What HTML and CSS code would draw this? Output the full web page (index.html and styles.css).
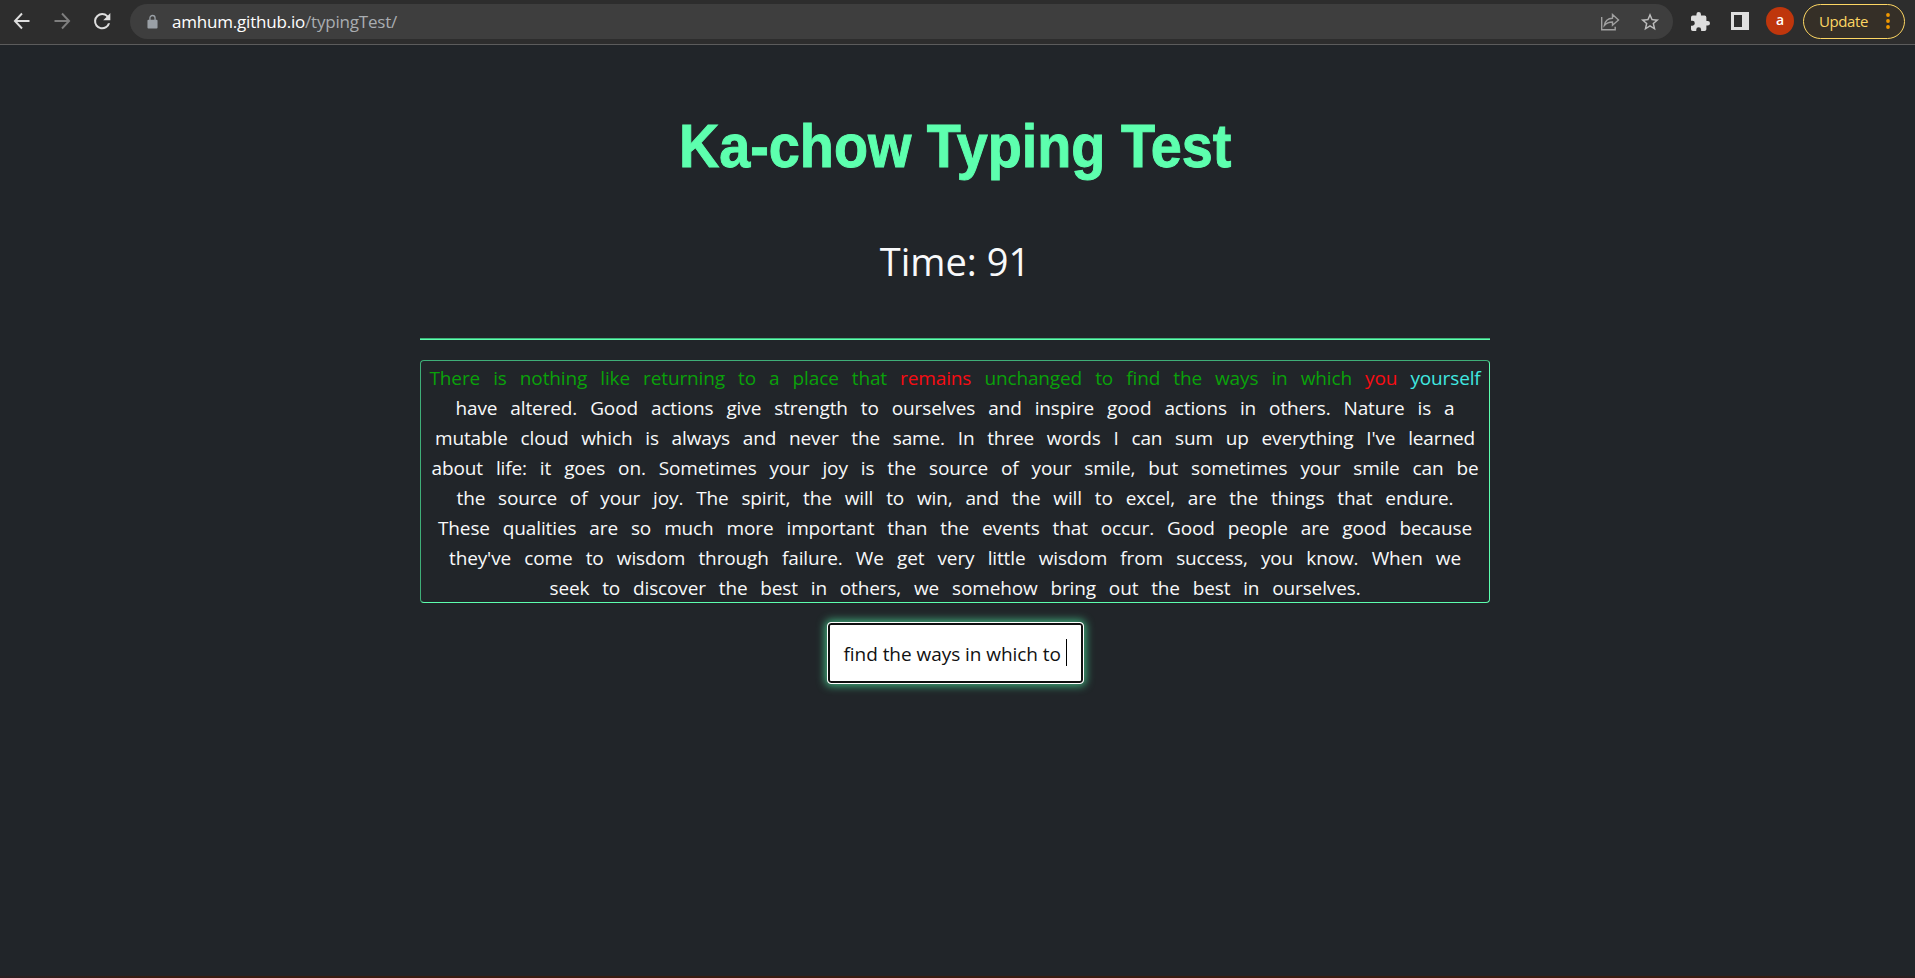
FILE: index.html
```html
<!DOCTYPE html>
<html lang="en">
<head>
<meta charset="utf-8">
<title>Ka-chow Typing Test</title>
<link rel="stylesheet" href="styles.css">
</head>
<body>
<header class="toolbar">
  <nav class="nav">
    <svg class="icon" viewBox="0 0 24 24"><path d="M21 12H5M12 3 3.500 12l8.500 9" fill="none" stroke="#dedede" stroke-width="2.300"/></svg>
    <svg class="icon" viewBox="0 0 24 24"><path d="M3 12h16M12 3 20.500 12 12 21" fill="none" stroke="#7e7e7e" stroke-width="2.300"/></svg>
    <svg class="icon" viewBox="0 0 24 24"><path d="M17.650 6.350A7.958 7.958 0 0 0 12 4a8 8 0 1 0 7.730 10h-2.080A6 6 0 1 1 12 6c1.660 0 3.140.690 4.220 1.780L13 11h7V4z" fill="#dedede" transform="translate(-2.400 -2.400) scale(1.220)"/></svg>
  </nav>
  <div class="omnibox">
    <svg class="lock" viewBox="0 0 12 16"><path d="M1.500 5.500h9a1 1 0 0 1 1 1v7.500a1 1 0 0 1-1 1h-9a1 1 0 0 1-1-1V6.500a1 1 0 0 1 1-1z" fill="#9aa0a6"/><path d="M3.200 6V3.700a2.800 2.800 0 0 1 5.600 0V6" fill="none" stroke="#9aa0a6" stroke-width="1.400"/></svg>
    <div class="url"><span class="host">amhum.github.io</span><span class="path">/typingTest/</span></div>
    <svg class="share" viewBox="0 0 20 18"><path d="M1.700 4v12.800h13.500v-3M4.300 12.500C5 8 8 5.400 12.500 5.200V1.500l6 5.500-6 5.300V9C9 9 6.500 10 4.300 12.500z" fill="none" stroke="#a0a0a0" stroke-width="1.400"/></svg>
    <svg class="star" viewBox="1 1 22 22"><path d="m22 9.240-7.190-.620L12 2 9.190 8.630 2 9.240l5.460 4.730L5.820 21 12 17.270 18.180 21l-1.630-7.030zM12 15.400l-3.760 2.270 1-4.280-3.320-2.880 4.380-.380L12 6.100l1.710 4.040 4.380.380-3.320 2.880 1 4.280z" fill="#bdbdbd"/></svg>
  </div>
  <svg class="puzzle" viewBox="2 1 21 21"><path d="M20.500 11H19V7a2 2 0 0 0-2-2h-4V3.500a2.500 2.500 0 0 0-5 0V5H4a2 2 0 0 0-2 2v3.800h1.500a2.700 2.700 0 0 1 0 5.400H2V20a2 2 0 0 0 2 2h3.800v-1.500a2.700 2.700 0 0 1 5.400 0V22H17a2 2 0 0 0 2-2v-4h1.500a2.500 2.500 0 0 0 0-5z" fill="#dedede"/></svg>
  <svg class="panel" viewBox="0 0 18 18"><path d="M0 0h18v18H0zM3 3v12h8V3z" fill="#dedede" fill-rule="evenodd"/></svg>
  <div class="avatar">a</div>
  <div class="update"><span>Update</span><svg class="dots" viewBox="0 0 4 16"><g fill="#f29900"><circle cx="2" cy="2" r="1.900"/><circle cx="2" cy="8" r="1.900"/><circle cx="2" cy="14" r="1.900"/></g></svg></div>
</header>
<main class="page">
  <h1 class="title">Ka-chow Typing Test</h1>
  <div class="timer">Time: 91</div>
  <div class="rule"></div>
  <section class="quote">
    <p class="line l1"><span class="ok">There</span> <span class="ok">is</span> <span class="ok">nothing</span> <span class="ok">like</span> <span class="ok">returning</span> <span class="ok">to</span> <span class="ok">a</span> <span class="ok">place</span> <span class="ok">that</span> <span class="bad">remains</span> <span class="ok">unchanged</span> <span class="ok">to</span> <span class="ok">find</span> <span class="ok">the</span> <span class="ok">ways</span> <span class="ok">in</span> <span class="ok">which</span> <span class="bad">you</span> <span class="now">yourself</span></p>
    <p class="line l2">have altered. Good actions give strength to ourselves and inspire good actions in others. Nature is a</p>
    <p class="line l3">mutable cloud which is always and never the same. In three words I can sum up everything I've learned</p>
    <p class="line l4">about life: it goes on. Sometimes your joy is the source of your smile, but sometimes your smile can be</p>
    <p class="line l5">the source of your joy. The spirit, the will to win, and the will to excel, are the things that endure.</p>
    <p class="line l6">These qualities are so much more important than the events that occur. Good people are good because</p>
    <p class="line l7">they've come to wisdom through failure. We get very little wisdom from success, you know. When we</p>
    <p class="line l8">seek to discover the best in others, we somehow bring out the best in ourselves.</p>
  </section>
  <div class="entry"><span>find the ways in which to</span><i class="caret"></i></div>
</main>
<div class="edge"></div>
</body>
</html>
```
FILE: styles.css
```css
* { box-sizing: border-box; }
body { margin: 0; height: 978px; display: flex; flex-direction: column; overflow: hidden; background: #212529; font-family: "Open Sans", sans-serif; color: #fff; }
.toolbar { height: 45px; flex: none; display: flex; align-items: flex-start; background: #2d2d2d; border-bottom: 1px solid #5c5c5c; }
.nav { display: flex; gap: 20px; padding: 11px 0 0 12px; width: 130px; }
.icon { width: 20px; height: 20px; flex: none; }
.omnibox { width: 1543px; height: 35px; margin-top: 4px; border-radius: 18px; background: #3e3e3e; display: flex; align-items: center; padding: 0 14px 0 17px; }
.lock { width: 11px; height: 16px; }
.url { flex: 1; margin-left: 14px; font-size: 17px; line-height: 34px; letter-spacing: -0.2px; }
.host { color: #fff; }
.path { color: #a9adb1; }
.share { width: 20px; height: 18px; margin-right: 20px; }
.star { width: 20px; height: 20px; margin-right: -1px; }
.puzzle { width: 19px; height: 19px; margin: 12px 0 0 18px; }
.panel { width: 18px; height: 18px; margin: 12px 0 0 21px; }
.avatar { width: 28px; height: 28px; margin: 7px 0 0 17px; border-radius: 50%; background: #bf360c; font-size: 14px; font-weight: 600; line-height: 26px; text-align: center; }
.update { width: 102px; height: 35px; margin: 4px 0 0 9px; border: 1.5px solid #fdd663; border-radius: 18px; background: #352f27; color: #fdd663; display: flex; align-items: center; justify-content: space-between; padding: 0 14px 2px 15px; font-size: 15px; line-height: 28px; letter-spacing: -0.4px; }
.dots { width: 4px; height: 16px; }
.page { width: 1070px; margin: 0 auto; display: flex; flex-direction: column; align-items: center; position: relative; left: -2.5px; flex: 1; }
.title { margin: 66px 0 0; font: bold 61px/70px "Liberation Sans", sans-serif; white-space: nowrap; color: #5dffae; -webkit-text-stroke: 1px #5dffae; transform: scaleX(0.914); }
.timer { margin-top: 50px; font-size: 38px; line-height: 60px; color: #f8f9fa; }
.rule { width: 1070px; height: 2px; margin-top: 47px; border-top: 1px solid #3fb57b; background: #5dffae; }
.quote { width: 1070px; height: 243px; margin-top: 20px; padding-top: 2px; border: 1px solid; border-color: #3fae78 #5dffae #5dffae #3fae78; border-radius: 4px; display: flex; flex-direction: column; align-items: center; }
.line { margin: 0; height: 30px; font-size: 19px; line-height: 31px; text-align: justify; text-align-last: justify; white-space: nowrap; letter-spacing: -0.13px; color: #f8f9fa; }
.l1 { width: 1051px; }
.l2 { width: 999px; }
.l3 { width: 1040px; }
.l4 { width: 1047px; }
.l5 { width: 997px; }
.l6 { width: 1034px; }
.l7 { width: 1012px; }
.l8 { width: 811px; }
.ok { color: #0aa10a; }
.bad { color: #f80c12; }
.now { color: #40e8e0; }
.entry { width: 257px; height: 62px; margin-top: 19px; border: 1px solid #fff; border-radius: 4px; background: #fff; box-shadow: inset 0 0 0 2px #101010, 0 0 8px 2px #3fae7c; display: flex; align-items: center; padding: 2px 0 0 16px; font-size: 19px; line-height: 30px; color: #111; white-space: nowrap; letter-spacing: -0.05px; }
.caret { width: 1px; height: 27px; margin: -3px 0 0 5px; background: #000; }
.edge { height: 2px; flex: none; background: linear-gradient(90deg, #2a2022, #381c10 8%, #381c10 92%, #2a2022); }
```
